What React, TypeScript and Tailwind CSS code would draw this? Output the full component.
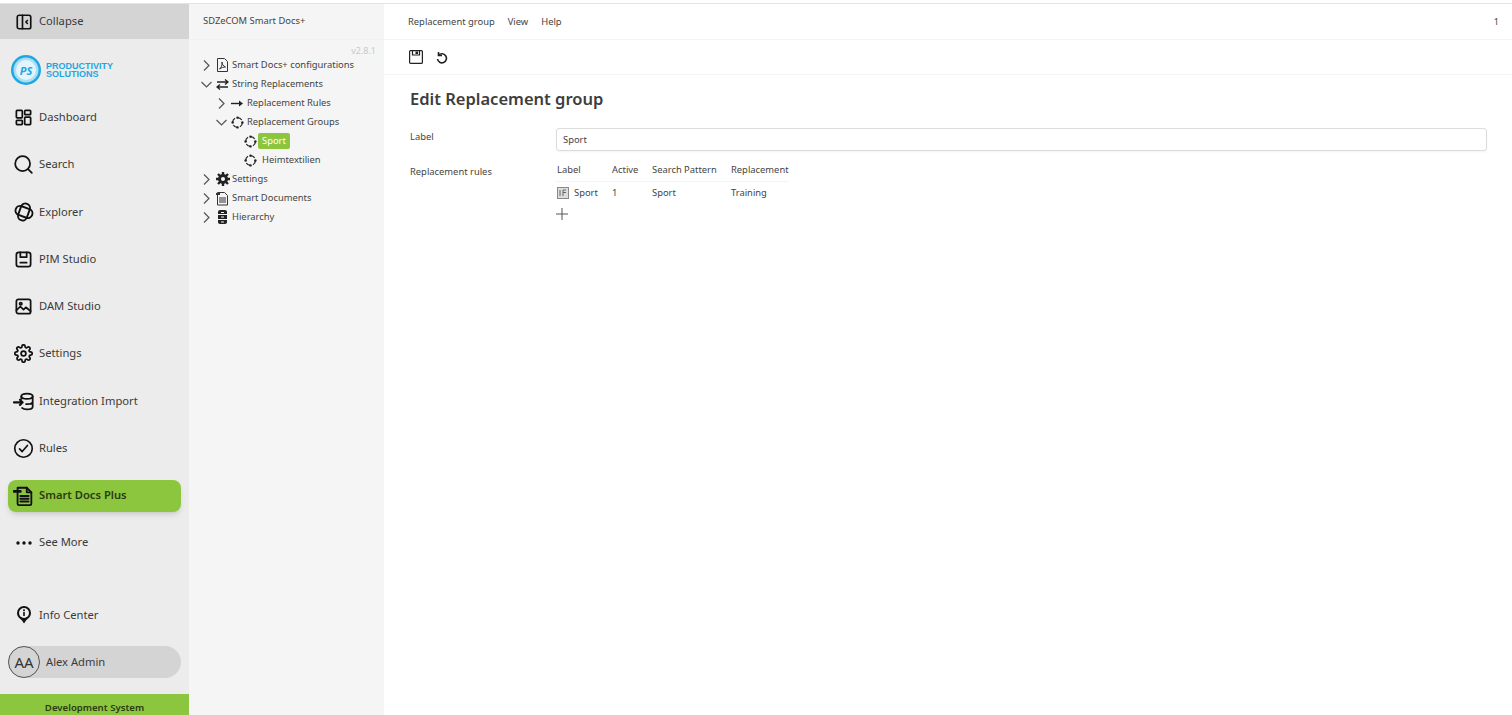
import React from "react";

const S = ({ children, size = 18, sw = 2, vb = 24, cls = "" }: any) => (
  <svg width={size} height={size} viewBox={`0 0 ${vb} ${vb}`} fill="none" stroke="currentColor" strokeWidth={sw} strokeLinecap="round" strokeLinejoin="round" className={cls}>
    {children}
  </svg>
);

const navTop = [
  ["Dashboard", <S size={19} sw={2.2}><rect x="3" y="3" width="7.5" height="9.5" rx="1" /><rect x="13.5" y="3" width="7.5" height="5.5" rx="1" /><rect x="3" y="15.5" width="7.5" height="5.5" rx="1" /><rect x="13.5" y="11.5" width="7.5" height="9.5" rx="1" /></S>],
  ["Search", <S size={21} sw={2}><circle cx="11" cy="11" r="8.5" /><path d="M17.500 17.500l4 4" /></S>],
  ["Explorer", <S size={20} sw={2.3}><g transform="rotate(20 12 12)"><rect x="1.500" y="6.500" width="21" height="11" rx="5.500" /><rect x="6.500" y="1.500" width="11" height="21" rx="5.500" /></g></S>],
  ["PIM Studio", <S size={19} sw={2.2}><rect x="3" y="3" width="18" height="18" rx="3" /><path d="M8 3v6h8V3M8 16h8" /></S>],
  ["DAM Studio", <S size={19} sw={2.2}><rect x="3" y="3" width="18" height="18" rx="2.500" /><circle cx="8.500" cy="8.500" r="1.500" /><path d="M3 17l5-5 4 4 3-3 6 5" /></S>],
  ["Settings", <S size={19} sw={2.2}><circle cx="12" cy="12" r="3" /><path d="M19.400 15a1.650 1.650 0 0 0 .33 1.820l.06.06a2 2 0 1 1-2.830 2.830l-.06-.06a1.650 1.650 0 0 0-2.820 1.170V21a2 2 0 1 1-4 0v-.09a1.650 1.650 0 0 0-2.820-1.170l-.06.06a2 2 0 1 1-2.830-2.830l.06-.06A1.650 1.650 0 0 0 3.100 14H3a2 2 0 1 1 0-4h.09a1.650 1.650 0 0 0 1.170-2.820l-.06-.06a2 2 0 1 1 2.830-2.830l.06.06A1.650 1.650 0 0 0 10 3.100V3a2 2 0 1 1 4 0v.09a1.650 1.650 0 0 0 2.820 1.170l.06-.06a2 2 0 1 1 2.830 2.830l-.06.06A1.650 1.650 0 0 0 20.900 10H21a2 2 0 1 1 0 4h-.09a1.650 1.650 0 0 0-1.510 1z" /></S>],
  ["Integration Import", <S size={21} vb={24}><ellipse cx="16" cy="6" rx="6.500" ry="3" /><path d="M9.500 6v3M22.500 6v12c0 1.700-3 3-6.500 3-2.500 0-4.600-.6-5.700-1.600M22.500 12c0 1.700-3 3-6.500 3h-1" /><path d="M1 13h10M8 10l3 3-3 3" strokeWidth="2.400" /></S>],
  ["Rules", <S size={21} sw={1.900}><circle cx="12" cy="12" r="10" /><path d="M7.500 12.500l3 3 6-7" /></S>],
];

const DocIcon = ({ size = 20 }: any) => (
  <S size={size} sw={2}>
    <path d="M5 3h10l5 5v12.500a1.500 1.500 0 0 1-1.500 1.500h-12A1.500 1.500 0 0 1 5 20.500z" />
    <path d="M15 3v5h5M8 12h9M8 15h9M8 18h9" />
    <path d="M1 7h7" strokeWidth="3" />
  </S>
);

const Cycle = ({ size = 13 }: any) => (
  <svg width={size} height={size} viewBox="0 0 16 16" fill="none" stroke="#222" strokeWidth="1.500">
    <path d="M8 2a6 6 0 0 1 6 6M14 8a6 6 0 0 1-6 6M8 14a6 6 0 0 1-6-6M2 8a6 6 0 0 1 6-6" strokeDasharray="6 3.400" />
    <circle cx="8" cy="2" r="1.500" fill="#222" stroke="none" />
    <circle cx="14" cy="8" r="1.500" fill="#222" stroke="none" />
    <circle cx="8" cy="14" r="1.500" fill="#222" stroke="none" />
    <circle cx="2" cy="8" r="1.500" fill="#222" stroke="none" />
  </svg>
);

const Chev = ({ open, show = true }: any) => (
  <span className="w-[13px] h-[13px] flex items-center justify-center text-[#555] shrink-0">
    {show && (
      <svg width="13" height="13" viewBox="0 0 13 13" fill="none" stroke="currentColor" strokeWidth="1.200">
        {open ? <path d="M1.500 4l5 5 5-5" /> : <path d="M4 1.500l5 5-5 5" />}
      </svg>
    )}
  </span>
);

const Row = ({ indent, open, chev = true, icon, children }: any) => (
  <div className={`h-[19px] flex items-center ${indent}`}>
    <Chev open={open} show={chev} />
    <span className="w-[15px] h-[15px] flex items-center justify-center ml-[2px] mr-[2px] text-[#333]">{icon}</span>
    {children}
  </div>
);

const NavItem = ({ label, icon, active }: any) => (
  <div className={`h-[32px] mx-2 flex items-center rounded-lg ${active ? "bg-[#8cc63f] shadow-md font-semibold text-[#2b3a10]" : "text-[#3a3a3a]"} mb-[15.250px]`}>
    <span className="w-[31px] flex justify-center text-[#111]">{icon}</span>
    <span className="text-[11.200px]">{label}</span>
  </div>
);

export default function App() {
  return (
    <div className="h-[715px] w-[1512px] overflow-hidden flex flex-col bg-white text-[#3a3a3a] [font-family:'Noto_Sans','Open_Sans',sans-serif]">
      <div className="h-[4px] bg-white border-b border-[#e4e4e4] shrink-0" />
      <div className="flex-1 flex min-h-0">
        <aside className="w-[189px] bg-[#ececec] flex flex-col shrink-0">
          <div className="h-[35px] bg-[#d4d4d4] flex items-center pl-2 text-[11.200px]">
            <span className="w-[31px] flex justify-center text-[#111]">
              <S size={18} sw={2.2}><rect x="3" y="3" width="18" height="18" rx="2.500" /><path d="M10 3v18M16.500 10l-2 2 2 2" /></S>
            </span>
            Collapse
          </div>
          <div className="h-[60px] flex items-center pl-[11px] pt-[2px] gap-[5px] shrink-0">
            <svg width="30" height="30" viewBox="0 0 30 30">
              <circle cx="15" cy="15" r="15" fill="#1ea7e1" />
              <circle cx="15" cy="15" r="12.500" fill="#a9def5" />
              <circle cx="15" cy="15" r="10" fill="#e3f4fc" />
              <text x="15" y="19.500" textAnchor="middle" fontSize="11" fontWeight="700" fontStyle="italic" fill="#1ea7e1" fontFamily="Noto Sans, sans-serif">PS</text>
            </svg>
            <div className="text-[9px] leading-[8px] font-bold text-[#1ea7e1] [font-family:'Liberation_Sans','Noto_Sans',sans-serif]">
              <div>PRODUCTIVITY</div>
              <div>SOLUTIONS</div>
            </div>
          </div>
          <div className="pt-[2.500px]">
            {navTop.map(([l, i]: any) => <NavItem key={l} label={l} icon={i} />)}
            <NavItem active label="Smart Docs Plus" icon={<DocIcon size={22} />} />
            <NavItem label="See More" icon={<svg width="16" height="4" viewBox="0 0 16 4" fill="#111"><circle cx="2" cy="2" r="1.700" /><circle cx="8" cy="2" r="1.700" /><circle cx="14" cy="2" r="1.700" /></svg>} />
          </div>
          <div className="mt-auto">
            <div className="h-[32px] mx-2 flex items-center text-[11.200px] mb-[15px]">
              <span className="w-[31px] flex justify-center text-[#111]">
                <svg width="16" height="20" viewBox="0 0 16 20"><path d="M8 1a7 7 0 0 1 7 7c0 3.800-3 5.600-5 7.500L8 18.500 6 15.500C4 13.600 1 11.800 1 8a7 7 0 0 1 7-7z" fill="#111" /><circle cx="8" cy="8" r="5" fill="#ececec" /><rect x="7.200" y="7" width="1.600" height="4" fill="#111" /><circle cx="8" cy="5.300" r="1" fill="#111" /></svg>
              </span>
              Info Center
            </div>
            <div className="h-[32px] mx-2 rounded-full bg-[#d4d4d4] flex items-center text-[11.200px] mb-[16px]">
              <span className="w-[32px] h-[32px] rounded-full border border-[#555] flex items-center justify-center text-[15px] text-[#333] shrink-0 mr-[6px]">AA</span>
              Alex Admin
            </div>
            <div className="h-[21px] bg-[#8cc63f] flex items-center justify-center text-[9.600px] font-semibold text-[#2b3a10] pt-[7px]">Development System</div>
          </div>
        </aside>

        <div className="w-[195px] bg-[#f5f5f5] shrink-0 flex flex-col text-[9.400px] text-[#444]">
          <div className="h-[36px] border-b border-[#f0f0f0] flex items-center pl-[14px] shrink-0">SDZeCOM Smart Docs+</div>
          <div className="text-right pr-2 text-[#c8c8c8] text-[9px] h-[17px] pt-[4px]">v2.8.1</div>
          <div className="pl-[11px] -mt-[1.500px]">
            <Row open={false} indent="pl-[0px]" icon={<svg width="13" height="14" viewBox="0 0 13 14" fill="none" stroke="#333"><path d="M1.500.5h7l3 3v10h-10zM3.500 11c1.500-1 3-4 2.500-7 0 2 1 4 3.500 5-2 0-4 .5-6 2z" /></svg>}>Smart Docs+ configurations</Row>
            <Row open indent="pl-[0px]" icon={<svg width="13" height="11" viewBox="0 0 13 11" fill="none" stroke="#222" strokeWidth="1.300"><path d="M1 3h11M9 .5L12 3 9 5.500M12 8H1M4 5.500L1 8l3 2.500" /></svg>}>String Replacements</Row>
            <Row open={false} indent="pl-[15px]" icon={<svg width="13" height="9" viewBox="0 0 13 9" fill="#222" stroke="#222" strokeWidth="1.400"><path d="M0 4.500h9" /><path d="M8 1.500l4 3-4 3z" stroke="none" /></svg>}>Replacement Rules</Row>
            <Row open indent="pl-[15px]" icon={<Cycle />}>Replacement Groups</Row>
            <Row chev={false} indent="pl-[28px]" icon={<Cycle />}>
              <span className="bg-[#8cc63f] text-white rounded-[2px] px-1 h-[16px] flex items-center -ml-[2px]">Sport</span>
            </Row>
            <Row chev={false} indent="pl-[28px]" icon={<Cycle />}><span className="pl-[2px]">Heimtextilien</span></Row>
            <Row open={false} indent="pl-[0px]" icon={<svg width="14" height="14" viewBox="0 0 14 14"><path d="M7 0v14M0 7h14M2 2l10 10M12 2L2 12" stroke="#222" strokeWidth="2.400" /><circle cx="7" cy="7" r="5" fill="#222" /><circle cx="7" cy="7" r="2" fill="#f5f5f5" /></svg>}>Settings</Row>
            <Row open={false} indent="pl-[0px]" icon={<svg width="13" height="15" viewBox="0 0 13 15" fill="none" stroke="#333"><path d="M1.500 1.500h7l3 3v9.500h-10zM3 7h7M3 9h7M3 11h7" /><path d="M0 3h4" strokeWidth="2" /></svg>}>Smart Documents</Row>
            <Row open={false} indent="pl-[0px]" icon={<svg width="11" height="14" viewBox="0 0 11 14"><path d="M3 0h5a2 2 0 0 1 2 2v2H1V2a2 2 0 0 1 2-2z" fill="#222" /><rect x="1" y="5" width="9" height="4" fill="#222" /><path d="M1 10h9v2a2 2 0 0 1-2 2H3a2 2 0 0 1-2-2z" fill="#222" /><rect x="4" y="2" width="3" height="1" fill="#f5f5f5" /><rect x="4" y="6.500" width="3" height="1" fill="#f5f5f5" /><rect x="4" y="11.500" width="3" height="1" fill="#f5f5f5" /></svg>}>Hierarchy</Row>
          </div>
        </div>

        <main className="flex-1 min-w-0 flex flex-col text-[9.400px] text-[#444]">
          <div className="h-[36px] border-b border-[#f4f4f4] flex items-center pl-6 pr-[13px] pt-[1px] gap-[13px] shrink-0">
            <span>Replacement group</span><span>View</span><span>Help</span>
            <span className="ml-auto text-[9px]">1</span>
          </div>
          <div className="h-[35px] border-b border-[#f4f4f4] flex items-center pl-[25px] pb-[1px] gap-[13px] shrink-0 text-[#222]">
            <svg width="14" height="14" viewBox="0 0 14 14" fill="none" stroke="#222" strokeWidth="1.200"><rect x="0.600" y="0.600" width="12.800" height="12.800" rx="1" /><path d="M3.500.6v4.400h7V.6" /><rect x="6.500" y="1.500" width="2.500" height="2.500" fill="#222" stroke="none" /></svg>
            <svg width="12" height="13" viewBox="0 0 12 13" fill="none" stroke="#222" strokeWidth="1.600" className="mt-[2px]"><path d="M2.600 4.300A4.500 4.500 0 1 1 1.500 8" /><path d="M2.500 1v3.500H6" /></svg>
          </div>
          <div className="pl-[26px] pr-[25px]">
            <h1 className="text-[16.500px] font-semibold text-[#3d3d3d] mt-[12px] leading-[24px]">Edit Replacement group</h1>
            <div className="flex mt-[18px]">
              <div className="w-[146px] shrink-0 pt-[1px]">Label</div>
              <div className="flex-1 h-[23px] border border-[#dcdcdc] rounded-[3px] flex items-center pl-[6px] pt-[1px] -mt-[1px] shadow-xs">Sport</div>
            </div>
            <div className="flex mt-[8px]">
              <div className="w-[146px] shrink-0 pt-[6px]">Replacement rules</div>
              <div>
                <div className="h-[23px] flex items-center pl-[1px] border-b border-[#f4f4f4]">
                  <span className="w-[55px]">Label</span><span className="w-[40px]">Active</span><span className="w-[79px]">Search Pattern</span><span>Replacement</span>
                </div>
                <div className="h-[23px] flex items-center pl-[1px]">
                  <span className="w-[55px] flex items-center gap-[5px]">
                    <svg width="12" height="12" viewBox="0 0 12 12"><rect x="0.500" y="0.500" width="11" height="11" fill="#ddd" stroke="#888" /><path d="M3 3v6M6 3v6M6 3h3M6 5.500h3" stroke="#666" fill="none" /></svg>
                    Sport
                  </span>
                  <span className="w-[40px]">1</span><span className="w-[79px]">Sport</span><span>Training</span>
                </div>
                <svg width="12" height="12" viewBox="0 0 12 12" stroke="#555" strokeWidth="1" className="mt-[3px]"><path d="M6 0v12M0 6h12" /></svg>
              </div>
            </div>
          </div>
        </main>
      </div>
    </div>
  );
}
